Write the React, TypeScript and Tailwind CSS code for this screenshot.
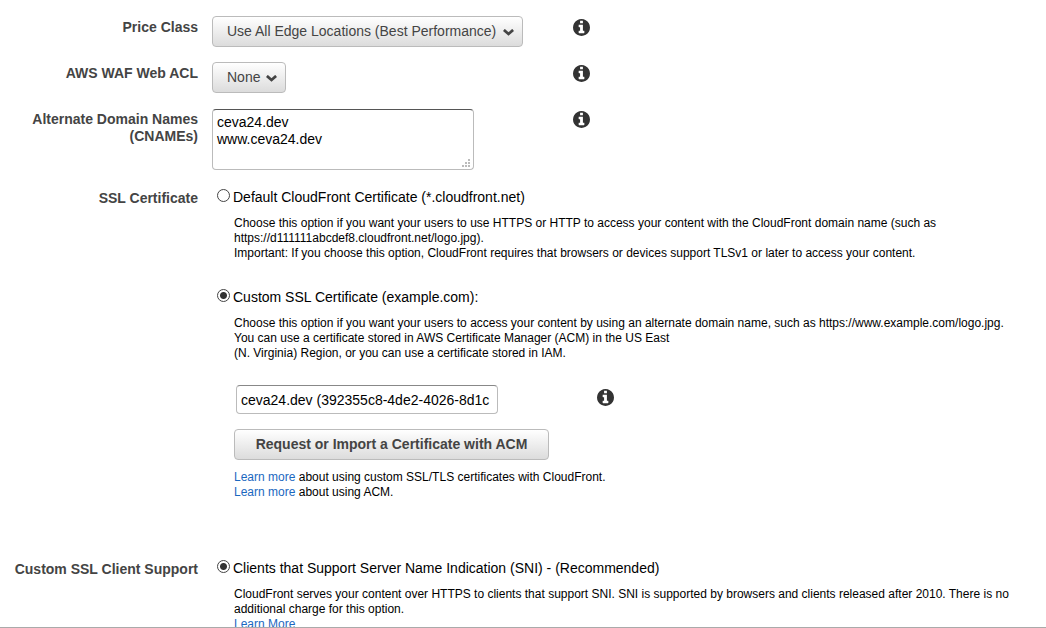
import type { ReactNode } from 'react';

function InfoButton({ topic }: { topic: string }) {
  return (
    <button type="button" aria-label={`Help: ${topic}`} className="block size-[17px] shrink-0 text-[#333]">
      <svg viewBox="0 128 1536 1536" className="size-[17px]" fill="currentColor" aria-hidden="true">
        <path d="M1024 1376v-160q0-14-9-23t-23-9h-96v-512q0-14-9-23t-23-9h-320q-14 0-23 9t-9 23v160q0 14 9 23t23 9h96v320h-96q-14 0-23 9t-9 23v160q0 14 9 23t23 9h448q14 0 23-9t9-23zm-128-896v-160q0-14-9-23t-23-9h-192q-14 0-23 9t-9 23v160q0 14 9 23t23 9h192q14 0 23-9t9-23zm640 416q0 209-103 385.5t-279.5 279.5-385.5 103-385.5-103-279.5-279.5-103-385.5 103-385.5 279.5-279.5 385.5-103 385.5 103 279.5 279.5 103 385.5z" />
      </svg>
    </button>
  );
}

function Row({ label, htmlFor, children }: { label: ReactNode; htmlFor?: string; children: ReactNode }) {
  const style = 'block pt-[3px] text-right text-[14px] leading-[17px] font-bold text-[#444]';
  return (
    <div className="grid grid-cols-[198px_minmax(0,1fr)] gap-x-3.5">
      {htmlFor ? (
        <label htmlFor={htmlFor} className={style}>{label}</label>
      ) : (
        <div className={style}>{label}</div>
      )}
      {children}
    </div>
  );
}

function Dropdown({ id, option, width }: { id: string; option: string; width: string }) {
  return (
    <div className={`relative ${width}`}>
      <select
        id={id}
        className="block h-[31px] w-full appearance-none overflow-hidden rounded-[4px] border border-[#bbb] bg-linear-to-b from-white to-[#dcdcdc] pr-6 pl-3.5 text-[14px] text-[#444]"
      >
        <option>{option}</option>
      </select>
      <svg viewBox="0 0 11 7" className="pointer-events-none absolute top-[13px] right-[9px] h-[7px] w-[11px]" aria-hidden="true">
        <path d="M0.9 0.9 5.5 5 10.1 0.9" fill="none" stroke="#444" strokeWidth="2.7" />
      </svg>
    </div>
  );
}

function Radio({ id, name, checked, children }: { id: string; name: string; checked?: boolean; children: ReactNode }) {
  return (
    <div className="flex h-[17px] items-center gap-[3px] pl-[5px]">
      <input
        type="radio"
        id={id}
        name={name}
        defaultChecked={checked}
        className="mb-1 size-[13px] shrink-0 appearance-none rounded-full border border-[#444] bg-white checked:bg-[radial-gradient(circle,#333_3px,white_4px)]"
      />
      <label htmlFor={id} className="text-[14px] leading-[17px]">{children}</label>
    </div>
  );
}

function Learn({ children }: { children: ReactNode }) {
  return <a href="#learn" className="text-[#1b68bf]">{children}</a>;
}

export default function App() {
  return (
    <main className="h-screen overflow-hidden border-b border-[#aaa] bg-white font-['Liberation_Sans',Arial,sans-serif] text-black">
      <form className="flex flex-col gap-[15px] pt-4">
        <Row label="Price Class" htmlFor="price">
          <div className="flex items-start">
            <div className="w-[361px]"><Dropdown id="price" option="Use All Edge Locations (Best Performance)" width="w-[311px]" /></div>
            <div className="pt-[3px]"><InfoButton topic="Price Class" /></div>
          </div>
        </Row>
        <Row label="AWS WAF Web ACL" htmlFor="waf">
          <div className="flex items-start">
            <div className="w-[361px]"><Dropdown id="waf" option="None" width="w-[74px]" /></div>
            <div className="pt-[3px]"><InfoButton topic="AWS WAF Web ACL" /></div>
          </div>
        </Row>
        <Row label={<>Alternate Domain Names<br />(CNAMEs)</>} htmlFor="cnames">
          <div className="flex items-start">
            <div className="w-[361px] pt-px">
              <div className="relative w-[262px]">
                <textarea
                  id="cnames"
                  defaultValue={'ceva24.dev\nwww.ceva24.dev'}
                  className="block h-[61px] w-full resize-none rounded-[4px] border border-[#bbb] border-t-[#555] px-1 py-1 text-[14px] leading-[17px]"
                />
                <svg viewBox="0 0 8 8" className="pointer-events-none absolute right-1 bottom-[3px] size-2" fill="#bbb" aria-hidden="true">
                  <path d="M6 0h2v2H6zM3 3h2v2H3zM6 3h2v2H6zM0 6h2v2H0zM3 6h2v2H3zM6 6h2v2H6z" />
                </svg>
              </div>
            </div>
            <div className="pt-[3px]"><InfoButton topic="Alternate Domain Names" /></div>
          </div>
        </Row>
        <div className="pt-0.5">
          <Row label="SSL Certificate">
            <div className="pt-0.5">
              <Radio id="default-cert" name="cert">Default CloudFront Certificate (*.cloudfront.net)</Radio>
              <p className="mt-2.5 pl-[22px] text-[12px] leading-[15px]">
                Choose this option if you want your users to use HTTPS or HTTP to access your content with the CloudFront domain name (such as
                <br />https://d111111abcdef8.cloudfront.net/logo.jpg).
                <br />Important: If you choose this option, CloudFront requires that browsers or devices support TLSv1 or later to access your content.
              </p>
              <div className="mt-7">
                <Radio id="custom-cert" name="cert" checked>Custom SSL Certificate (example.com):</Radio>
              </div>
              <div className="mt-2.5 pl-[22px] text-[12px] leading-[15px]">
                <p>
                  Choose this option if you want your users to access your content by using an alternate domain name, such as https://www.example.com/logo.jpg.
                  <br />You can use a certificate stored in AWS Certificate Manager (ACM) in the US East
                  <br />(N. Virginia) Region, or you can use a certificate stored in IAM.
                </p>
                <div className="mt-6 flex items-start pl-0.5">
                  <div className="w-[361px]">
                    <input
                      type="text"
                      aria-label="Custom SSL certificate"
                      defaultValue="ceva24.dev (392355c8-4de2-4026-8d1c"
                      className="block h-[29px] w-[262px] rounded-[4px] border border-[#bbb] border-t-[#888] px-1 text-[14px]"
                    />
                  </div>
                  <div className="pt-1"><InfoButton topic="Custom SSL certificate" /></div>
                </div>
                <button
                  type="button"
                  className="mt-[15px] block h-[31px] w-[315px] rounded-[4px] border border-[#bbb] bg-linear-to-b from-white to-[#dcdcdc] text-[14px] font-bold text-[#444]"
                >
                  Request or Import a Certificate with ACM
                </button>
                <p className="mt-2.5"><Learn>Learn more</Learn> about using custom SSL/TLS certificates with CloudFront.</p>
                <p><Learn>Learn more</Learn> about using ACM.</p>
              </div>
            </div>
          </Row>
        </div>
        <div className="pt-[43px]">
          <Row label="Custom SSL Client Support">
            <div className="pt-0.5">
              <Radio id="sni" name="client" checked>Clients that Support Server Name Indication (SNI) - (Recommended)</Radio>
              <p className="mt-2.5 pl-[22px] text-[12px] leading-[15px]">
                CloudFront serves your content over HTTPS to clients that support SNI. SNI is supported by browsers and clients released after 2010. There is no
                <br />additional charge for this option.
                <br /><Learn>Learn More</Learn>
              </p>
            </div>
          </Row>
        </div>
      </form>
    </main>
  );
}
